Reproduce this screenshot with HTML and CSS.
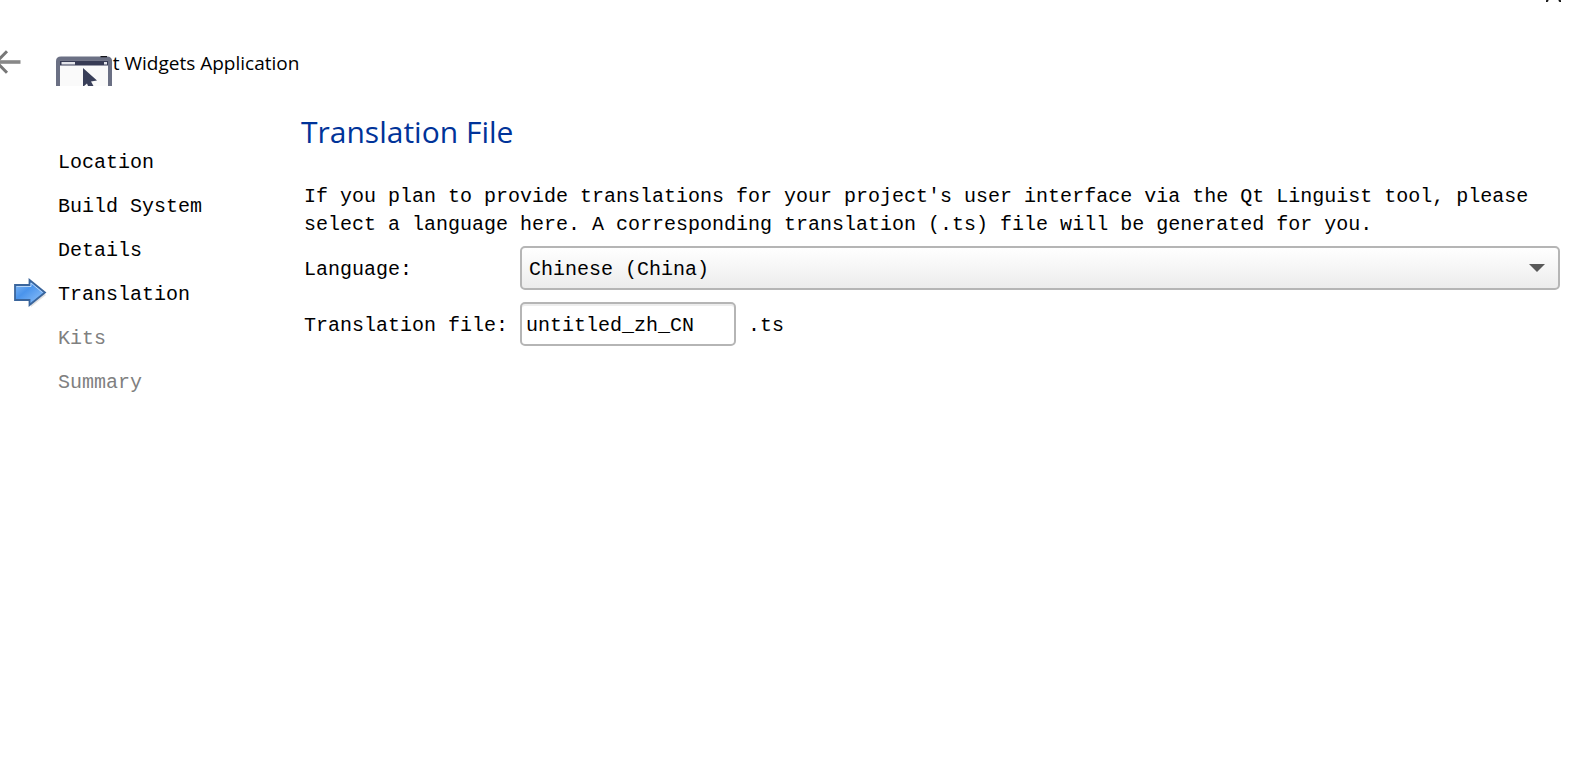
FILE: index.html
```
<!DOCTYPE html>
<html lang="en">
<head>
    <meta charset="UTF-8">
    <meta name="viewport" content="width=device-width, initial-scale=1.0">
    <title>Qt Widgets Application</title>
    <link rel="stylesheet" href="styles.css">
</head>
<body>
    <div class="wizard">
        <!-- Title bar -->
        <div class="titlebar">
            <button class="close" type="button" aria-label="Close">
                <svg width="15" height="2" viewBox="0 0 15 2"><path d="M0 2L2 0M15 2L13 0" stroke="#111" stroke-width="2" fill="none"/></svg>
            </button>
        </div>

        <!-- Header -->
        <header class="header">
            <button class="back" type="button" aria-label="Back">
                <svg width="21" height="24" viewBox="0 0 21 24" fill="none" stroke="#777">
                    <path d="M0 12H20.5" stroke-width="3.6" stroke="#888"/>
                    <path d="M7 1.200L-3.500 12L7 22.800" stroke-width="3"/>
                </svg>
            </button>
            <svg class="app-icon" width="56" height="30" viewBox="0 0 56 30">
                <path d="M0 30V5Q0 0.500 5 0.500H51Q56 0.500 56 5V30Z" fill="#6b7084"/>
                <path d="M44.500 0.500H51" stroke="#15161c" stroke-width="1.500"/>
                <path d="M4 4.500H52V30H4Z" fill="#fafafa"/>
                <path d="M4 4.500H52V9.500H4Z" fill="#373b54"/>
                <path d="M5.500 6H19V8.500H5.500Z" fill="#e3e4ea"/>
                <path d="M48 6H51V8.500H48Z" fill="#e3e4ea"/>
                <path d="M27 12L41 24.500L35 25.500L37.500 30H32L31 27.500L28 30H27Z" fill="#393f59"/>
            </svg>
            <span class="app-name">Qt Widgets Application</span>
        </header>

        <div class="main">
            <!-- Steps -->
            <ol class="steps">
                <li>Location</li>
                <li>Build System</li>
                <li>Details</li>
                <li class="current" aria-current="step">
                    <svg class="arrow" width="34" height="30" viewBox="0 0 34 30">
                        <defs>
                            <linearGradient id="blue" x1="0" y1="0" x2="1" y2="1">
                                <stop offset="0" stop-color="#8abcf5"/>
                                <stop offset="0.4" stop-color="#4a94ec"/>
                                <stop offset="1" stop-color="#9ac8fa"/>
                            </linearGradient>
                        </defs>
                        <path d="M2 10H17V4L32 17L17 29V23H2Z" fill="#000" opacity="0.12"/>
                        <path d="M1 7H15.500V2L31 14.500L15.500 27V22H1Z" fill="url(#blue)" stroke="#3a659c" stroke-width="1.800"/>
                        <path d="M2.500 8.500H17V5L28.500 14.500" fill="none" stroke="#b5d5f8" stroke-width="1"/>
                    </svg>
                    Translation
                </li>
                <li class="pending">Kits</li>
                <li class="pending">Summary</li>
            </ol>

            <!-- Page -->
            <form class="page">
                <h1>Translation File</h1>
                <p>If you plan to provide translations for your project's user interface via the Qt Linguist tool, please select a language here. A corresponding translation (.ts) file will be generated for you.</p>
                <div class="fields">
                    <label for="language">Language:</label>
                    <div class="select-box">
                        <select id="language">
                            <option>Chinese (China)</option>
                        </select>
                        <svg class="chevron" width="16" height="8" viewBox="0 0 16 8"><path d="M0 0H16L8 8Z" fill="#595959"/></svg>
                    </div>
                    <label for="file">Translation file:</label>
                    <div class="file-row">
                        <input type="text" id="file" value="untitled_zh_CN">
                        <span class="suffix">.ts</span>
                    </div>
                </div>
            </form>
        </div>
    </div>
</body>
</html>
```

FILE: styles.css
```
* {
    box-sizing: border-box;
}

body, h1, p, ol, button {
    margin: 0;
    padding: 0;
}

body {
    background: #fff;
    color: #000;
    font-family: "Liberation Mono", monospace;
    font-size: 20px;
    line-height: 28px;
}

svg {
    display: block;
    flex: none;
}

button {
    border: none;
    background: none;
}

.titlebar {
    display: flex;
    justify-content: flex-end;
    height: 49px;
    padding-right: 13px;
}

.close {
    align-self: flex-start;
}

/* Header */
.header {
    display: flex;
    align-items: flex-start;
    height: 65px;
}

.back {
    width: 56px;
    padding-top: 1px;
}

.app-icon {
    position: relative;
    z-index: 1;
    margin-top: 7px;
}

.app-name {
    margin-left: -14px;
    font-family: "Open Sans", sans-serif;
    font-size: 19px;
}

.main {
    display: grid;
    grid-template-columns: 301px 1fr;
}

/* Steps */
.steps {
    padding: 27px 0 0 58px;
    list-style: none;
    line-height: 44px;
}

.steps .current {
    position: relative;
}

.steps .pending {
    color: #808080;
}

.arrow {
    position: absolute;
    left: -44px;
    top: 5px;
}

/* Page */
.page {
    padding-right: 14px;
}

h1 {
    color: #003399;
    font-family: "Open Sans", sans-serif;
    font-size: 30px;
    font-weight: 400;
    line-height: 36px;
}

.page p {
    margin: 33px 0 7px;
    padding-left: 3px;
}

.fields {
    display: grid;
    grid-template-columns: 216px 1fr;
    gap: 12px 0;
    align-items: center;
    padding-left: 3px;
}

label, .suffix {
    padding-top: 3px;
}

.select-box {
    position: relative;
}

select, input {
    height: 44px;
    border: 2px solid #b5b5b5;
    border-radius: 5px;
    color: #000;
    font: inherit;
}

select {
    display: block;
    width: 100%;
    padding: 3px 40px 0 7px;
    appearance: none;
    background: linear-gradient(#fff, #ececec);
}

.chevron {
    position: absolute;
    right: 15px;
    top: 18px;
    pointer-events: none;
}

.file-row {
    display: flex;
    align-items: center;
    gap: 12px;
}

input {
    width: 216px;
    padding: 3px 4px 0;
    background: #fff;
    box-shadow: inset 0 2px 0 #ededed;
}
```
